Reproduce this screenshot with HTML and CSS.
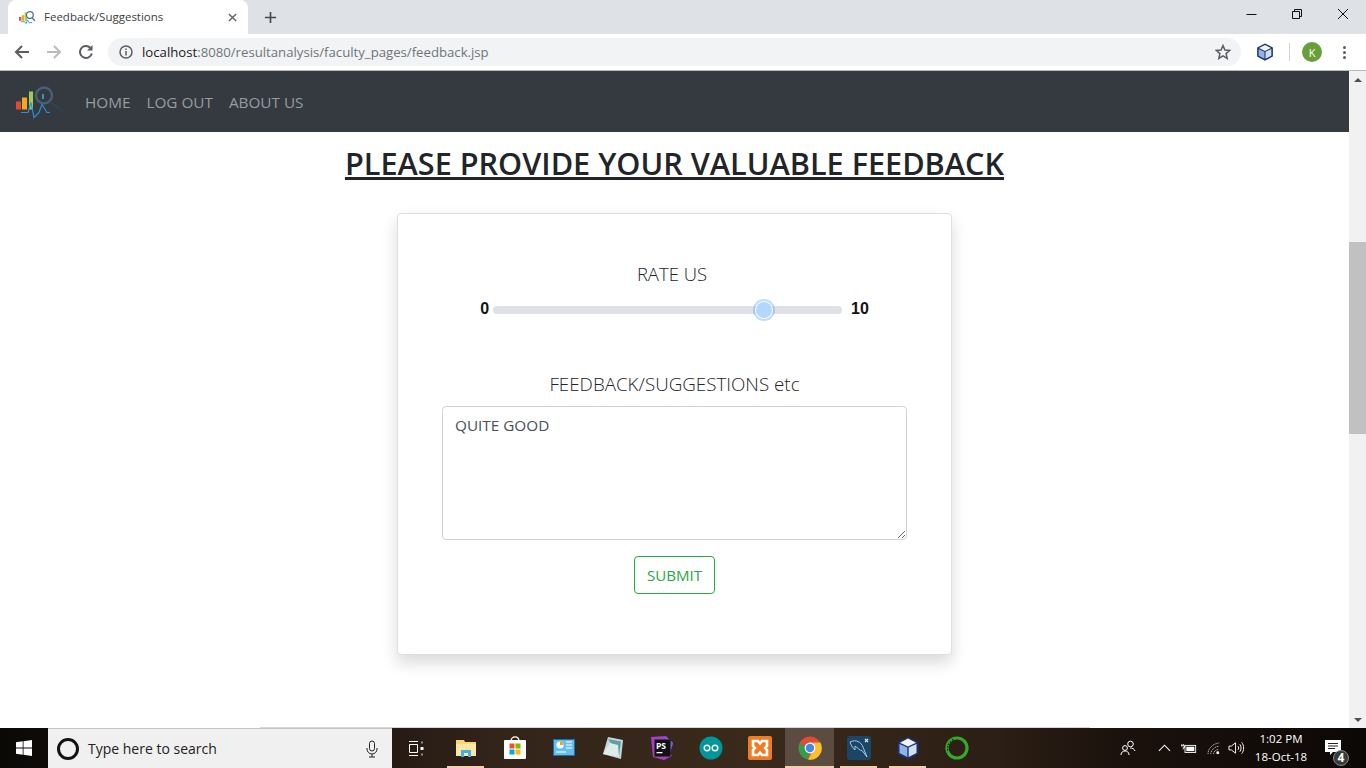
FILE: index.html
```html
<!DOCTYPE html>
<html lang="en">
<head>
<meta charset="utf-8">
<title>Feedback/Suggestions</title>
<link rel="stylesheet" href="styles.css">
</head>
<body>
<svg class="defs" width="0" height="0" aria-hidden="true">
  <defs>
    <symbol id="cube" viewBox="0 0 24 24">
      <path d="M12 .5 22.500 6V18L12 23.500 1.500 18V6Z" fill="#1f2f6b"/>
      <path d="M12 2.500 20 6.800 12 10.500 4 6.800Z" fill="#eef4fa"/>
      <path d="M3.500 8 11.300 11.600V21L3.500 16.900Z" fill="#8db6e6"/>
      <path d="M20.500 8 12.700 11.600V21L20.500 16.900Z" fill="#cfe0f2"/>
    </symbol>
  </defs>
</svg>

<header class="chrome">
  <div class="tabstrip">
    <div class="tab">
      <svg class="favicon" viewBox="0 0 18 14">
        <rect x="0" y="7" width="2.500" height="4" fill="#e8543a"/>
        <rect x="3" y="5" width="2.500" height="6" fill="#f5a81c"/>
        <rect x="6" y="2" width="2.500" height="9" fill="#a5cc55"/>
        <circle cx="11.500" cy="5" r="3.600" fill="none" stroke="#54708a" stroke-width="1.300"/>
        <path d="M14 8 17 11" stroke="#54708a" stroke-width="1.300"/>
        <path d="M2 12H6L7.500 14 9 10 10.500 13H14" fill="none" stroke="#3d9ad9" stroke-width="1"/>
      </svg>
      <span class="tab-title">Feedback/Suggestions</span>
      <svg class="tab-close" viewBox="0 0 10 10"><path d="M1 1 9 9M9 1 1 9" stroke="#5f6368" stroke-width="1.600"/></svg>
    </div>
    <div class="newtab"><svg viewBox="0 0 14 14"><path d="M7 1V13M1 7H13" stroke="#45494d" stroke-width="1.800"/></svg></div>
    <div class="winctl">
      <div class="winbtn"><svg viewBox="0 0 11 12"><path d="M.5 6.500H10.500" stroke="#111" stroke-width="1"/></svg></div>
      <div class="winbtn"><svg viewBox="0 0 11 12"><path d="M.5 3.500H7.500V10.500H.5ZM2.500 3.500V1.500H9.500V8.500H7.500" fill="none" stroke="#111" stroke-width="1"/></svg></div>
      <div class="winbtn"><svg viewBox="0 0 12 12"><path d="M1 1 11 11M11 1 1 11" stroke="#111" stroke-width="1"/></svg></div>
    </div>
  </div>
  <div class="toolbar">
    <div class="tool"><svg viewBox="0 0 16 16"><path d="M15 8H2M8 2 2 8 8 14" fill="none" stroke="#5a5d61" stroke-width="2"/></svg></div>
    <div class="tool"><svg viewBox="0 0 16 16"><path d="M1 8H14M8 2 14 8 8 14" fill="none" stroke="#b9bbbe" stroke-width="2"/></svg></div>
    <div class="tool"><svg viewBox="0 0 16 16"><path d="M13.800 9.500A6 6 0 1 1 12.300 3.800" fill="none" stroke="#5a5d61" stroke-width="2"/><path d="M14.500 1V6.500H9Z" fill="#5a5d61"/></svg></div>
    <div class="omnibox">
      <svg class="info" viewBox="0 0 14 14"><circle cx="7" cy="7" r="6" fill="none" stroke="#5a5d61" stroke-width="1.500"/><path d="M7 6V10.500M7 3.400V5" stroke="#5a5d61" stroke-width="1.500"/></svg>
      <span class="url"><span class="host">localhost</span>:8080/resultanalysis/faculty_pages/feedback.jsp</span>
      <svg class="star" viewBox="0 0 16 16"><path d="M8 1.500 9.900 6 14.800 6.400 11.100 9.600 12.200 14.400 8 11.900 3.800 14.400 4.900 9.600 1.200 6.400 6.100 6Z" fill="none" stroke="#5a5d61" stroke-width="1.500"/></svg>
    </div>
    <div class="ext"><svg class="ext-cube"><use href="#cube"/></svg></div>
    <div class="profile"><span class="avatar">K</span></div>
    <div class="dots"><i></i><i></i><i></i></div>
  </div>
</header>

<div class="viewport">
  <main class="page">
    <nav class="navbar">
      <svg class="logo" viewBox="0 0 40 34">
        <rect x="1" y="16.500" width="5" height="8" fill="#e24a33"/>
        <rect x="7" y="12.500" width="5" height="12" fill="#f5a81c"/>
        <rect x="14" y="6.500" width="4" height="18" fill="#a2c95a"/>
        <circle cx="29" cy="10.500" r="8" fill="none" stroke="#4a5f73" stroke-width="2.500"/>
        <path d="M35 17 45 24" stroke="#2f4558" stroke-width="2"/>
        <path d="M28 9V14" stroke="#3d8fcc" stroke-width="2"/>
        <path d="M6 27.500H13L16 17.500 19 32.500 24 27.500 27 19.500 32 27.500H35" fill="none" stroke="#2a8fd8" stroke-width="1.200"/>
      </svg>
      <a class="navlink">HOME</a>
      <a class="navlink">LOG OUT</a>
      <a class="navlink">ABOUT US</a>
    </nav>
    <h1 class="title">PLEASE PROVIDE YOUR VALUABLE FEEDBACK</h1>
    <section class="card">
      <h2 class="label label-rate">RATE US</h2>
      <div class="rate-row">
        <b class="end">0</b>
        <input class="range" type="range" min="0" max="10" step="0.1" value="7.9" aria-label="Rate us">
        <b class="end">10</b>
      </div>
      <h2 class="label label-feedback">FEEDBACK/SUGGESTIONS etc</h2>
      <textarea class="comment" aria-label="Feedback">QUITE GOOD</textarea>
      <button class="submit" type="button">SUBMIT</button>
    </section>
    <div class="foot-rule"></div>
  </main>
  <aside class="scrollbar">
    <div class="sb-arrow"><span class="tri-up"></span></div>
    <div class="sb-thumb"></div>
    <div class="sb-arrow sb-down"><span class="tri-down"></span></div>
  </aside>
</div>

<footer class="taskbar">
  <div class="start">
    <svg viewBox="0 0 16 16"><path d="M0 2.300 6.700 1.300V7.600H0ZM7.500 1.200 16 0V7.600H7.500ZM0 8.400H6.700V14.700L0 13.700ZM7.500 8.400H16V16L7.500 14.800Z" fill="#fff"/></svg>
  </div>
  <div class="search">
    <span class="cortana"></span>
    <span class="search-text">Type here to search</span>
    <svg class="mic" viewBox="0 0 12 18"><rect x="3.500" y="1" width="5" height="10" rx="2.500" fill="none" stroke="#222" stroke-width="1"/><path d="M1 8V9A5 5 0 0 0 11 9V8M6 14V17M3 17H9" fill="none" stroke="#222" stroke-width="1"/></svg>
  </div>
  <div class="taskview">
    <svg viewBox="0 0 16 15"><path d="M1 .5H10M1 14.500H10M1.500 3.500H9.500V11.500H1.500ZM14 .5V2.500M14 12.500V14.500" fill="none" stroke="#fff" stroke-width="1"/><rect x="12.500" y="6" width="3" height="3" fill="#fff"/></svg>
  </div>
  <div class="apps">
    <div class="app on">
      <svg viewBox="0 0 24 24"><path d="M2 4H10L11 6H22V20H2Z" fill="#f7d774"/><path d="M2 8H22V20H2Z" fill="#fbe7a1"/><path d="M7 14H17V21H14V17H10V21H7Z" fill="#3fb0e8"/></svg>
    </div>
    <div class="app">
      <svg viewBox="0 0 24 24"><path d="M8 5C8 -.5 16 -.5 16 5" fill="none" stroke="#fff" stroke-width="1.200"/><rect x="1" y="4" width="22" height="19" rx="1" fill="#fff"/><rect x="6.500" y="7.500" width="5" height="5" fill="#f25022"/><rect x="12.500" y="7.500" width="5" height="5" fill="#7fba00"/><rect x="6.500" y="13.500" width="5" height="5" fill="#00a4ef"/><rect x="12.500" y="13.500" width="5" height="5" fill="#ffb900"/></svg>
    </div>
    <div class="app">
      <svg viewBox="0 0 24 24"><rect x="1" y="3" width="22" height="17" fill="#1e6fa8"/><rect x="2" y="4" width="20" height="15" fill="#63c0ee"/><circle cx="8" cy="9" r="3.600" fill="#fff"/><path d="M8 9V5.400A3.600 3.600 0 0 1 11.600 9Z" fill="#f0a030"/><path d="M14 6H20M14 9H20M14 12H20M4 16H14" stroke="#fff" stroke-width="1.200"/></svg>
    </div>
    <div class="app">
      <svg viewBox="0 0 24 24"><path d="M7 1 22 4 20 23 2 18Z" fill="#c9d6d8"/><path d="M7 3 20 5.500 18 21 5 17 11 9Z" fill="#5e9ea8"/><path d="M2 18 9 7 17 9 18 21Z" fill="#dfeaea"/></svg>
    </div>
    <div class="app">
      <svg viewBox="0 0 24 24"><path d="M1 1 16 0 23 7 20 17 22 20 14 24 3 21Z" fill="#a541c5"/><path d="M16 1 23 7 20 17 15 12Z" fill="#5c6de0"/><rect x="4.500" y="3.500" width="16" height="17" fill="#111"/><text class="ps" x="6" y="12.500">PS</text><rect x="6.500" y="16" width="6" height="1.300" fill="#fff"/></svg>
    </div>
    <div class="app">
      <svg viewBox="0 0 24 24"><circle cx="12" cy="12" r="11.500" fill="#00979c"/><circle cx="8" cy="12" r="2.800" fill="none" stroke="#fff" stroke-width="1.400"/><circle cx="16" cy="12" r="2.800" fill="none" stroke="#fff" stroke-width="1.400"/></svg>
    </div>
    <div class="app">
      <svg viewBox="0 0 24 24"><rect width="24" height="24" rx="2" fill="#f07b25"/><path d="M5 5H10L12 7.500 14 5H19V10L17 12 19 14V19H14L12 16.500 10 19H5V14L7 12 5 10Z" fill="none" stroke="#fff" stroke-width="2.600"/></svg>
    </div>
    <div class="app active">
      <svg viewBox="0 0 24 24"><circle cx="12" cy="12" r="11.500" fill="#dd4b39"/><path d="M12 12 1.600 7.500A11.500 11.500 0 0 0 10 23.300Z" fill="#2f9e48"/><path d="M12 6.500H22.300A11.500 11.500 0 0 1 10 23.400L15.500 13.500Z" fill="#fbc02d"/><circle cx="12" cy="12" r="5.400" fill="#fff"/><circle cx="12" cy="12" r="4.200" fill="#4a86e8"/></svg>
    </div>
    <div class="app on">
      <svg viewBox="0 0 24 24"><rect width="24" height="24" rx="3" fill="#1c4668"/><path d="M3 6C9 3 14 6 16 11L20 21 15.500 15C12 14 11 12 8 10L8 14C5 11 4 9 3 6Z" fill="none" stroke="#a9c6dc" stroke-width="1"/><path d="M18 3 21 6M21 3 18 6" stroke="#d6e2ec" stroke-width="1.300"/></svg>
    </div>
    <div class="app on"><svg><use href="#cube"/></svg></div>
    <div class="app">
      <svg viewBox="0 0 24 24"><circle cx="12" cy="12" r="10" fill="none" stroke="#35a92c" stroke-width="3.200"/><path d="M8 3.200 2.600 9 2.700 15" fill="none" stroke="#0f2a0f" stroke-width="1.300" stroke-dasharray="1.500 1.500"/></svg>
    </div>
  </div>
  <div class="tray">
    <svg class="t-people" viewBox="0 0 16 16"><circle cx="10.500" cy="4" r="2.800" fill="none" stroke="#fff"/><circle cx="5" cy="8" r="2.400" fill="none" stroke="#fff"/><path d="M1 15C1 12 3 11 5 11S9 12 9 15M10 8C12.500 8 14.500 9 15 11" fill="none" stroke="#fff"/></svg>
    <svg class="t-chev" viewBox="0 0 14 8"><path d="M1 7 7 1 13 7" fill="none" stroke="#fff" stroke-width="1.100"/></svg>
    <svg class="t-batt" viewBox="0 0 18 12"><rect x="4.500" y="2.500" width="12" height="8" fill="none" stroke="#fff"/><rect x="6" y="4" width="9" height="5" fill="#fff"/><path d="M1 1V3M3 1V3M0 3H4V5H2.500V7" fill="none" stroke="#fff"/></svg>
    <svg class="t-wifi" viewBox="0 0 16 14"><path d="M1 13C1 7 6 2 13 1M4 13C4 9 8 5 13 4.500M7 13C7 10.500 9 8.500 12 8" fill="none" stroke="#bdbdbd" stroke-width="1" stroke-dasharray="1.500 .7"/><circle cx="11.500" cy="11.500" r="1.600" fill="#fff"/></svg>
    <svg class="t-vol" viewBox="0 0 18 14"><path d="M1 5H3.500L8 1.500V12.500L3.500 9H1Z" fill="none" stroke="#fff"/><path d="M10.500 5C11.500 6 11.500 8 10.500 9M12.500 3C14.300 5 14.300 9 12.500 11M14.500 1C17.200 4 17.200 10 14.500 13" fill="none" stroke="#fff"/></svg>
    <div class="clock"><span>1:02 PM</span><span>18-Oct-18</span></div>
    <div class="notify">
      <svg viewBox="0 0 16 16"><path d="M0 0H16V12H8L5 15V12H0Z" fill="#fff"/><path d="M3 3.500H13M3 6H13M3 8.500H10" stroke="#222" stroke-width="1"/></svg>
      <span class="badge">4</span>
    </div>
  </div>
</footer>
</body>
</html>
```
FILE: styles.css
```css
* { box-sizing: border-box; }
html, body { margin: 0; padding: 0; height: 768px; overflow: hidden; }
body {
  display: flex;
  flex-direction: column;
  width: 1366px;
  background: #fff;
  font-family: "Open Sans", "Liberation Sans", sans-serif;
  color: #212529;
}
.defs { position: absolute; }
svg { display: block; }

/* browser chrome */
.chrome { flex: none; height: 71px; border-bottom: 1px solid #b8babc; background: #fff; }
.tabstrip { display: flex; align-items: stretch; height: 34px; padding-left: 8px; background: #dee1e6; }
.tab {
  display: flex; align-items: center; width: 240px; padding: 0 10px 0 11px;
  background: #fff; border-radius: 8px 8px 0 0;
}
.favicon { width: 17px; height: 14px; }
.tab-title { margin: -2px 0 0 8px; font-size: 11.500px; color: #3c4043; white-space: nowrap; }
.tab-close { width: 9px; height: 9px; margin-left: auto; margin-right: 1px; }
.newtab { display: flex; align-items: center; justify-content: center; width: 32px; margin-left: 6px; }
.newtab svg { width: 13px; height: 13px; }
.winctl { display: flex; margin-left: auto; }
.winbtn { display: flex; justify-content: center; width: 46px; padding-top: 8px; }
.winbtn svg { width: 11px; height: 12px; }
.winbtn:last-child svg { width: 12px; }

.toolbar { display: flex; align-items: center; height: 36px; padding: 0 12px 0 6px; }
.tool { display: flex; justify-content: center; width: 32px; }
.tool svg { width: 16px; height: 16px; }
.omnibox {
  display: flex; align-items: center; flex: 1; height: 28px; margin-left: 6px; padding: 0 10px 0 11px;
  background: #f1f3f4; border-radius: 14px;
}
.info { width: 14px; height: 14px; }
.url { margin-left: 9px; font-size: 13.180px; color: #70757a; white-space: nowrap; }
.host { color: #202124; }
.star { width: 16px; height: 16px; margin-left: auto; }
.ext { display: flex; justify-content: center; width: 49px; padding-right: 1px; border-right: 1px solid #d2d4d6; }
.ext-cube { width: 18px; height: 18px; }
.profile { display: flex; justify-content: center; width: 44px; }
.avatar {
  display: flex; align-items: center; justify-content: center; width: 20px; height: 20px;
  border-radius: 50%; background: #689f38; color: #fff; font-size: 11px;
}
.dots { display: flex; flex-direction: column; align-items: center; gap: 2px; width: 20px; }
.dots i { width: 3px; height: 3px; border-radius: 50%; background: #5a5d61; }

/* page */
.viewport { display: flex; flex: none; height: 657px; }
.page { display: flex; flex-direction: column; width: 1349px; }
.navbar { display: flex; align-items: center; flex: none; height: 61px; padding-left: 15px; background: #343a40; }
.logo { width: 40px; height: 34px; margin-right: 30px; overflow: visible; }
.navlink { margin-right: 16px; font-size: 15.300px; color: #999c9f; }
.title {
  align-self: center; margin: 12px 0 31px; font-size: 30.650px; line-height: 38px; font-weight: 600;
  text-decoration: underline; white-space: nowrap; color: #212529;
}
.card {
  display: flex; flex-direction: column; align-items: center; width: 555px; height: 442px; flex: none;
  align-self: center; padding-top: 45px;
  background: #fff; border: 1px solid #dedfe0; border-radius: 4px;
  box-shadow: 0 8px 16px rgba(0, 0, 0, .15);
}
.label { margin: 0; line-height: 30px; font-weight: 300; color: #212529; white-space: nowrap; }
.label-rate { margin-right: 5px; font-size: 18.500px; }
.label-feedback { margin-top: 47px; font-size: 18.800px; }
.rate-row { display: flex; align-items: center; height: 24px; margin-top: 9px; }
.end { font-family: "Liberation Sans", Arial, sans-serif; font-size: 16px; line-height: 20px; font-weight: 700; color: #111; margin-top: -3px; }
.range {
  -webkit-appearance: none; appearance: none; width: 349px; height: 8px; margin: 0 9px 0 4px; padding: 0;
  background: #dee2e6; border-radius: 4px; outline: none;
}
.range::-webkit-slider-thumb {
  -webkit-appearance: none; width: 16px; height: 16px; border-radius: 50%; border: 0;
  background: #b3d7ff; box-shadow: 0 0 0 1px #fff, 0 0 0 3px rgba(0, 123, 255, .25);
}
.comment {
  display: block; flex: none; width: 465px; height: 134px; margin-top: 7px; padding: 6px 12px;
  font: 15.300px/24px "Open Sans", "Liberation Sans", sans-serif; color: #495057;
  background: #fff; border: 1px solid #ced4da; border-radius: 4px; outline: none; resize: both;
}
.submit {
  flex: none; width: 81px; height: 38px; margin-top: 16px; padding: 0;
  font: 15.100px/24px "Open Sans", "Liberation Sans", sans-serif; color: #28a745;
  background: #fff; border: 1px solid #28a745; border-radius: 4px;
}
.foot-rule { flex: none; height: 1px; margin: auto 259px 0 260px; background: #d8d8d8; }

.scrollbar { display: flex; flex-direction: column; width: 17px; background: #f1f1f1; }
.sb-arrow { display: flex; align-items: center; justify-content: center; flex: none; height: 17px; }
.sb-down { margin-top: auto; }
.tri-up { border: 4px solid transparent; border-top: 0; border-bottom: 4px solid #505050; }
.tri-down { border: 4px solid transparent; border-bottom: 0; border-top: 4px solid #505050; }
.sb-thumb { flex: none; height: 192px; margin-top: 154px; background: #c1c1c1; }

/* taskbar */
.taskbar {
  display: flex; align-items: stretch; flex: none; height: 40px;
  background: linear-gradient(90deg, #0b0906 0, #1a120d 300px, #33241a 500px, #3a2a1b 760px, #2b1e14 1000px, #1a110c 1130px, #0c0806 1366px);
}
.start { display: flex; align-items: center; justify-content: center; width: 48px; }
.start svg { width: 16px; height: 16px; }
.search { display: flex; align-items: center; width: 344px; padding-left: 9px; background: #f0f0f0; border-top: 1px solid #c4c4c4; }
.cortana { width: 22px; height: 22px; border: 3px solid #111; border-radius: 50%; }
.search-text { margin-left: 9px; font-size: 14px; color: #222; white-space: nowrap; }
.mic { width: 12px; height: 18px; margin-left: auto; margin-right: 14px; }
.taskview { display: flex; align-items: center; justify-content: center; width: 49px; padding-right: 2px; }
.taskview svg { width: 16px; height: 15px; }
.apps { display: flex; }
.app { display: flex; align-items: center; justify-content: center; width: 49px; position: relative; }
.app:nth-child(n+8) { left: 1px; }
.app svg { width: 24px; height: 24px; }
.app.active { background: #5a4c40; }
.app.on::after, .app.active::after {
  content: ""; position: absolute; left: 6px; right: 6px; bottom: 0; height: 2px; background: #f7cdb0;
}
.app.active::after { left: 0; right: 0; }
.ps { font: 700 8.500px "Open Sans", sans-serif; fill: #fff; }
.tray { display: flex; align-items: center; margin-left: auto; }
.t-people { width: 16px; height: 16px; margin-right: 22px; }
.t-chev { width: 13px; height: 8px; margin-right: 10px; }
.t-batt { width: 16px; height: 11px; margin-right: 10px; }
.t-wifi { width: 15px; height: 13px; margin-right: 6px; }
.t-vol { width: 17px; height: 14px; margin-right: 5px; }
.clock {
  display: flex; flex-direction: column; align-items: center; width: 62px;
  font-size: 11.500px; line-height: 18px; color: #fff; white-space: nowrap;
}
.notify { position: relative; align-self: stretch; width: 54px; }
.notify svg { position: absolute; left: 13px; top: 12px; width: 16px; height: 16px; }
.badge {
  position: absolute; left: 21px; top: 22px; display: flex; align-items: center; justify-content: center;
  width: 16px; height: 16px; border-radius: 50%; background: #3a3a3a; border: 1px solid #888;
  color: #fff; font-size: 12px; line-height: 14px; font-weight: 700;
}
```
